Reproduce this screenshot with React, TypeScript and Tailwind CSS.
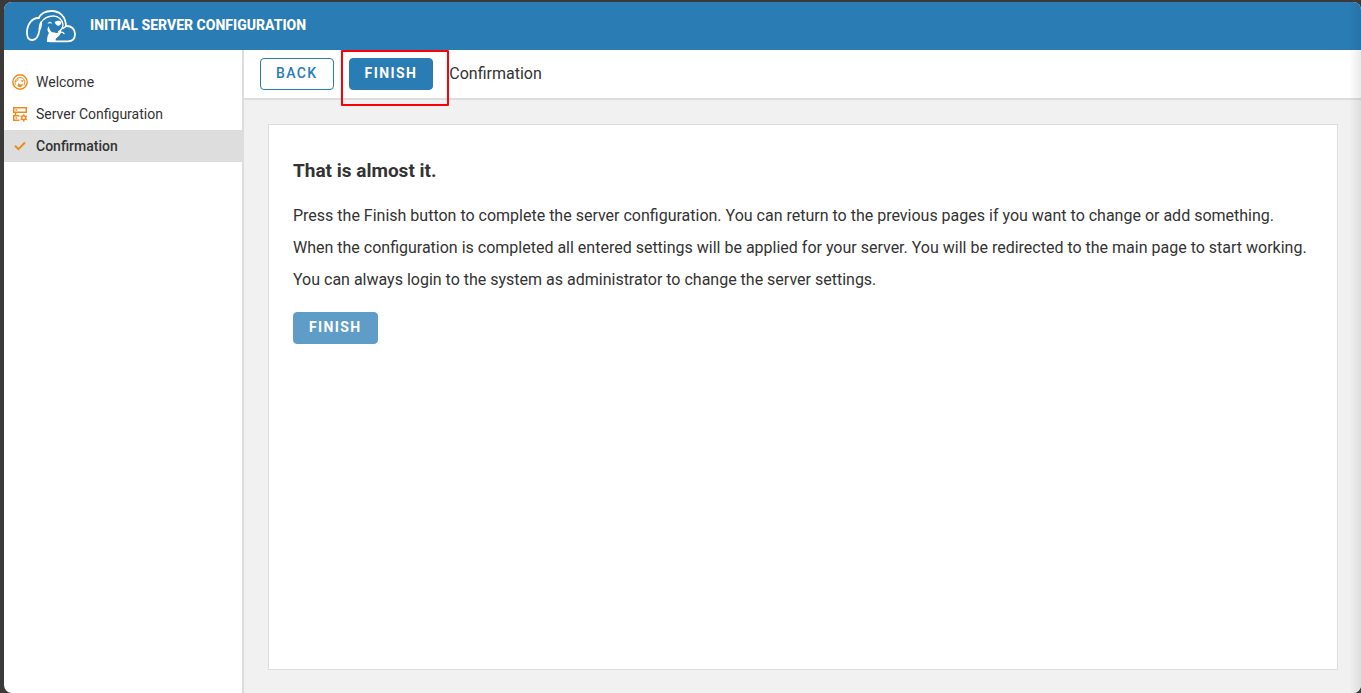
import React from "react";

function Logo() {
  return (
    <svg viewBox="78 26 156 102" className="h-[34px] w-[52px] shrink-0" fill="none" stroke="#fff" strokeWidth="5.5" strokeLinecap="round" strokeLinejoin="round" aria-hidden="true">
      <path d="M116 53C123 39 138 32 155 32C179 32 197 48 198 77C214 76 225 86 225 101C225 115 217 123 203 123H150" />
      <path d="M116 53C95 52 81 73 81 97C81 111 87 119 97 119C112 119 116 103 118 91C119 80 119 72 124 65" />
      <path d="M122 68C131 53 145 47 160 47C176 47 187 59 189 72C189 82 184 90 176 94" strokeWidth="4" />
      <path d="M124 65C127 72 123 79 121 86" strokeWidth="3.5" />
      <path d="M164 66C169 60 182 60 184 66C184 73 177 78 173 76C169 75 165 70 164 66Z" fill="#fff" stroke="none" />
      <path d="M145 68C147 64 154 65 155 69C152 67 148 68 145 68Z" fill="#fff" strokeWidth="2" />
      <path d="M146 78C140 86 143 94 147 98C142 106 141 116 141 125H170C164 119 167 114 174 109C181 105 184 94 184 86C178 97 170 101 162 96C155 98 149 91 146 78Z" fill="#fff" stroke="none" />
      <path d="M172 108C178 95 187 92 192 100" strokeWidth="4" />
      <path d="M198 78L189 84" strokeWidth="4.5" />
    </svg>
  );
}

function WelcomeIcon() {
  return (
    <svg viewBox="0 0 16 16" className="size-4 shrink-0" fill="none" stroke="#ee8a1d" strokeWidth="1.4" strokeLinecap="round" aria-hidden="true">
      <circle cx="8" cy="8" r="7.2" />
      <path d="M3.2 10.5C2.2 6.5 5 3.6 8 3.6C10.8 3.6 12.8 5.5 12.8 8.2L12 11" strokeWidth="1" />
      <path d="M3.4 7.6C5 7.3 5.6 6.4 6 5" strokeWidth="1" />
      <path d="M9.2 6.6L11.4 6.3L10.6 7.7Z" fill="#ee8a1d" strokeWidth=".6" />
      <path d="M6 8.8C6.8 10.6 9 11 11 9.6L10.4 11.6L8.6 13.2L5.6 12.6Z" fill="#ee8a1d" stroke="none" />
    </svg>
  );
}

function ServerIcon() {
  return (
    <svg viewBox="0 0 16 16" className="size-4 shrink-0" fill="none" stroke="#ee8a1d" strokeWidth="1.5" aria-hidden="true">
      <path d="M1.7 1.7H14.3V6.3H1.7Z" />
      <path d="M7.5 9.7H1.7V14.3H7.5M3.5 6.3V9.7" />
      <path d="M3.5 4H5.2M3.5 12H5.2" strokeWidth="1.4" />
      <circle cx="11.7" cy="11.8" r="2" strokeWidth="1.4" />
      <path d="M11.7 8.2V9.8M11.7 13.8V15.5M8.6 10L10 10.8M13.4 12.8L14.8 13.6M8.6 13.6L10 12.8M13.4 10.8L14.8 10" strokeWidth="1.5" />
    </svg>
  );
}

function CheckIcon() {
  return (
    <svg viewBox="0 0 16 16" className="size-4 shrink-0" fill="none" stroke="#ee8a1d" strokeWidth="2" aria-hidden="true">
      <path d="M3 7.8L6.4 11.2L13 4.5" />
    </svg>
  );
}

const steps = [
  { label: "Welcome", icon: <WelcomeIcon />, current: false },
  { label: "Server Configuration", icon: <ServerIcon />, current: false },
  { label: "Confirmation", icon: <CheckIcon />, current: true },
];

const buttonBase = "h-8 rounded-[4px] border px-[15px] pb-[3px] text-sm tracking-widest uppercase";

export default function App() {
  return (
    <div className="flex min-h-screen bg-[#3b3a38] pt-0.5 pl-1 font-['Roboto',sans-serif] text-[#333]">
      <div className="relative flex flex-1 flex-col overflow-hidden rounded-[8px] bg-white">
        <header className="flex h-12 items-center gap-3 bg-[#2a7cb5] pl-[22px] text-white">
          <Logo />
          <h1 className="pb-0.5 text-sm font-extrabold uppercase">Initial Server Configuration</h1>
        </header>
        <div className="flex flex-1">
          <nav className="w-60 shrink-0 border-r-2 border-[#ddd] pt-4 text-sm" aria-label="Steps">
            {steps.map((step) => (
              <a
                key={step.label}
                href="#"
                aria-current={step.current ? "step" : undefined}
                className={
                  step.current
                    ? "flex h-8 items-center gap-2 bg-[#ddd] pl-2 font-medium"
                    : "flex h-8 items-center gap-2 pl-2"
                }
              >
                {step.icon}
                {step.label}
              </a>
            ))}
          </nav>
          <div className="flex min-w-0 flex-1 flex-col">
            <div className="flex h-[50px] items-center border-b-2 border-[#ddd] pl-4">
              <button type="button" className={`${buttonBase} border-[#2a7cb5] bg-white font-medium text-[#2a7cb5]`}>
                Back
              </button>
              <div className="relative mr-4 ml-[15px]">
                <button type="button" className={`${buttonBase} border-[#2a7cb5] bg-[#2a7cb5] font-bold text-white`}>
                  Finish
                </button>
                <div className="pointer-events-none absolute -top-2 -right-4 -bottom-4 -left-2 rounded-[1px] border-2 border-[#fb0007]" />
              </div>
              <h2 className="pb-px">Confirmation</h2>
            </div>
            <main className="flex flex-1 flex-col bg-[#f1f1f1] p-6 pr-[23px] pb-[23px]">
              <section className="flex-1 border border-[#ddd] bg-white px-6 pt-8">
                <h3 className="mb-[15px] text-[19px] leading-7 font-bold">That is almost it.</h3>
                <div className="mb-4 leading-8">
                  <p>
                    Press the Finish button to complete the server configuration. You can return to the previous pages if you want to change or add something.
                  </p>
                  <p>
                    When the configuration is completed all entered settings will be applied for your server. You will be redirected to the main page to start working.
                  </p>
                  <p>You can always login to the system as administrator to change the server settings.</p>
                </div>
                <button type="button" className={`${buttonBase} border-[#5f9dc8] bg-[#5f9dc8] font-bold text-white`}>
                  Finish
                </button>
              </section>
            </main>
          </div>
        </div>
        <div className="pointer-events-none absolute inset-y-0 right-0 w-3 bg-linear-to-r from-transparent to-black/8" />
      </div>
    </div>
  );
}
